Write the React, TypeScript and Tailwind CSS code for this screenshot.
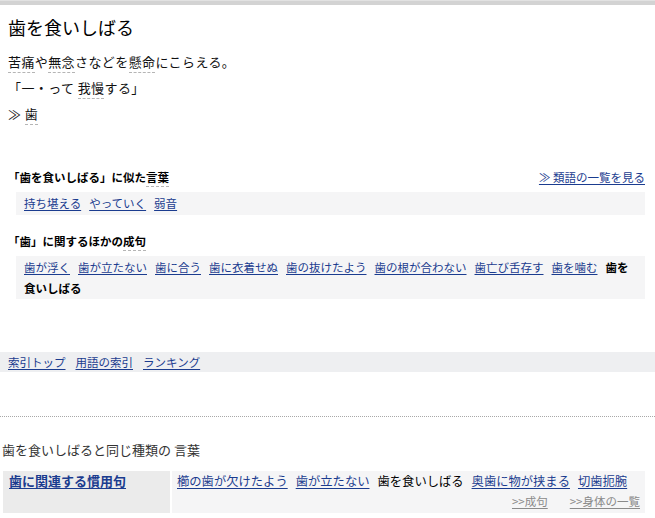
import React from "react";

const F = { fontFamily: '"Noto Sans CJK JP", "Noto Sans", sans-serif' };

function Dot({ children }: { children: React.ReactNode }) {
  return <span className="border-b border-dashed border-[#b5b5b5] pb-[1px]">{children}</span>;
}

function L({ children, last }: { children: React.ReactNode; last?: boolean }) {
  return (
    <a href="#" className={`text-[#1b3c8f] underline underline-offset-2 ${last ? "" : "mr-[8px]"}`}>
      {children}
    </a>
  );
}

export default function App() {
  const idioms = ["歯が浮く", "歯が立たない", "歯に合う", "歯に衣着せぬ", "歯の抜けたよう", "歯の根が合わない", "歯亡び舌存す", "歯を噛む"];
  return (
    <div style={F} className="w-[655px] h-[518px] overflow-hidden bg-white text-black">
      <div className="h-[5px] bg-[#d3d3d3] border-t border-[#e2e2e2]" />
      <div className="pl-2 pr-[10px]">
        <h1 className="mt-[10px] text-[18px] leading-[24px] font-normal">歯を食いしばる</h1>
        <div className="mt-[10px] text-[13px] leading-[26px] tracking-[0.4px] text-[#111]">
          <div>
            <Dot>苦痛</Dot>や<Dot>無念</Dot>さなどを<Dot>懸命</Dot>にこらえる。
          </div>
          <div>
            「一・って <Dot>我慢</Dot>する」
          </div>
          <div>
            ≫ <Dot>歯</Dot>
          </div>
        </div>

        <div className="mt-[42px] flex items-center justify-between text-[11.5px] leading-[16px]">
          <div className="font-bold">
            「歯を食いしばる」に似た<Dot>言葉</Dot>
          </div>
          <a href="#" className="text-[#1b3c8f] underline underline-offset-2">≫ 類語の一覧を見る</a>
        </div>
        <div className="mt-[7px] ml-2 bg-[#f5f5f6] px-2 text-[11.5px] leading-[23px]">
          <L>持ち堪える</L>
          <L>やっていく</L>
          <L last>弱音</L>
        </div>

        <div className="mt-[18px] text-[11.5px] leading-[16px] font-bold">
          「歯」に関するほかの<Dot>成句</Dot>
        </div>
        <div className="mt-[7px] ml-2 bg-[#f5f5f6] pl-2 pr-2 pt-[1px] text-[11.5px] leading-[21px] h-[43px]">
          <div>
            {idioms.map((t) => (
              <L key={t}>{t}</L>
            ))}
            <span className="font-bold">歯を</span>
          </div>
          <div className="font-bold">食いしばる</div>
        </div>
      </div>

      <div className="mt-[53px] h-[20px] bg-[#eeeff1] pl-2 flex items-center gap-[10px] text-[11.5px] leading-[20px]">
        <a href="#" className="text-[#1b3c8f] underline underline-offset-2">索引トップ</a>
        <a href="#" className="text-[#1b3c8f] underline underline-offset-2">用語の索引</a>
        <a href="#" className="text-[#1b3c8f] underline underline-offset-2">ランキング</a>
      </div>

      <div className="mt-[44px] border-t border-dotted border-[#a8a8a8]" />

      <div className="mt-[24px] pl-[2px] text-[13px] leading-[18px] text-[#333]">
        歯を食いしばると同じ種類の 言葉
      </div>

      <div className="mt-[12px] flex gap-[2px] pl-[3px] pr-[10px] h-[42px]">
        <div className="w-[167px] bg-[#ebebeb] pl-[6px] text-[13px] leading-[20px]">
          <a href="#" className="font-bold text-[#1b3c8f] underline underline-offset-2">歯に関連する慣用句</a>
        </div>
        <div className="flex-1 bg-[#f5f5f6] pl-[5px] pr-[5px] text-[12.3px] leading-[20px]">
          <div>
            <L>櫛の歯が欠けたよう</L>
            <L>歯が立たない</L>
            <span className="mr-[8px]">歯を食いしばる</span>
            <L>奥歯に物が挟まる</L>
            <L last>切歯扼腕</L>
          </div>
          <div className="flex justify-end gap-[22px] text-[11.5px]">
            <a href="#" className="text-[#8a8a8a] underline underline-offset-2">&gt;&gt;成句</a>
            <a href="#" className="text-[#8a8a8a] underline underline-offset-2">&gt;&gt;身体の一覧</a>
          </div>
        </div>
      </div>
    </div>
  );
}
